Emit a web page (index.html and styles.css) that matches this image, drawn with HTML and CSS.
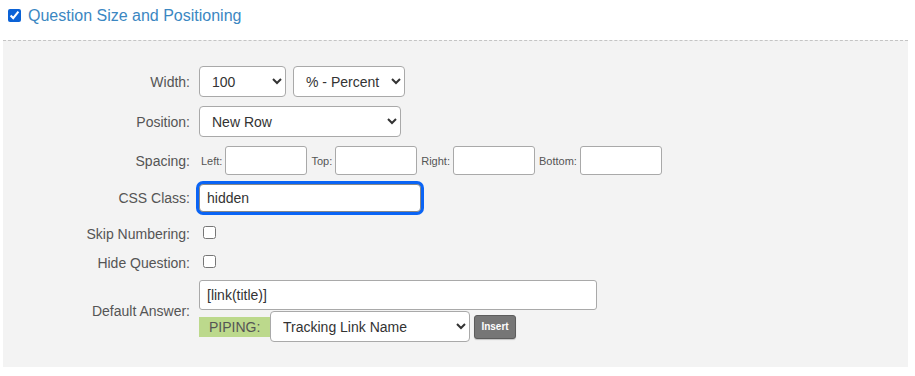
FILE: index.html
```html
<!DOCTYPE html>
<html lang="en">
<head>
    <meta charset="UTF-8">
    <meta name="viewport" content="width=device-width, initial-scale=1.0">
    <title>Question Size and Positioning</title>
    <link rel="stylesheet" href="styles.css">
</head>
<body>
    <div class="section-title">
        <input type="checkbox" id="sizeToggle" checked>
        <label for="sizeToggle">Question Size and Positioning</label>
    </div>

    <div class="panel">
        <div class="row">
            <label class="lbl">Width:</label>
            <div class="fields">
                <select class="sel sel-width">
                    <option>100</option>
                </select>
                <select class="sel sel-unit">
                    <option>% - Percent</option>
                </select>
            </div>
        </div>

        <div class="row">
            <label class="lbl">Position:</label>
            <div class="fields">
                <select class="sel sel-position">
                    <option>New Row</option>
                </select>
            </div>
        </div>

        <div class="row">
            <label class="lbl">Spacing:</label>
            <div class="fields spacing">
                <span class="small">Left:</span><input type="text" class="txt txt-spacing">
                <span class="small">Top:</span><input type="text" class="txt txt-spacing">
                <span class="small">Right:</span><input type="text" class="txt txt-spacing">
                <span class="small">Bottom:</span><input type="text" class="txt txt-spacing">
            </div>
        </div>

        <div class="row row-css">
            <label class="lbl">CSS Class:</label>
            <div class="fields">
                <input type="text" class="txt txt-css focused" value="hidden">
            </div>
        </div>

        <div class="row row-check">
            <label class="lbl">Skip Numbering:</label>
            <div class="fields">
                <input type="checkbox" class="chk">
            </div>
        </div>

        <div class="row row-check">
            <label class="lbl">Hide Question:</label>
            <div class="fields">
                <input type="checkbox" class="chk">
            </div>
        </div>

        <div class="row row-default">
            <label class="lbl">Default Answer:</label>
            <div class="fields stack">
                <input type="text" class="txt txt-default" value="[link(title)]">
                <div class="piping">
                    <span class="piping-label">PIPING:</span>
                    <select class="sel sel-piping">
                        <option>Tracking Link Name</option>
                    </select>
                    <button type="button" class="btn-insert">Insert</button>
                </div>
            </div>
        </div>
    </div>
</body>
</html>
```

FILE: styles.css
```css
body {
    font-family: Arial, "Liberation Sans", sans-serif;
    margin: 0;
    padding: 0;
    background: #fff;
    color: #555;
}

.section-title {
    display: flex;
    align-items: center;
    height: 31px;
    padding-left: 8px;
}

.section-title input {
    width: 13px;
    height: 13px;
    margin: 0 7px 0 0;
    accent-color: #0b62d6;
}

.section-title label {
    font-size: 16px;
    color: #3b87c2;
}

.panel {
    margin: 9px 7px 0 3px;
    padding: 25px 0 25px 0;
    background-color: #f3f3f3;
    border-top: 1px dashed #c4c4c4;
}

.row {
    display: flex;
    align-items: center;
    margin-bottom: 9px;
}

.lbl {
    width: 187px;
    text-align: right;
    padding-right: 9px;
    font-size: 14px;
    color: #555;
    flex-shrink: 0;
}

.fields {
    display: flex;
    align-items: center;
}

.sel {
    height: 31px;
    font-family: inherit;
    font-size: 14px;
    color: #333;
    background: #fff;
    border: 1px solid #a9a9a9;
    border-radius: 4px;
    padding: 0 6px 0 8px;
}

.sel-width {
    width: 87px;
    margin-right: 7px;
}

.sel-unit {
    width: 112px;
}

.sel-position {
    width: 202px;
}

.txt {
    font-family: inherit;
    font-size: 14px;
    color: #333;
    background: #fff;
    border: 1px solid #a9a9a9;
    border-radius: 3px;
    box-sizing: border-box;
    margin: 0;
}

.spacing .small {
    font-size: 11px;
    color: #555;
    margin: 0 3px 0 1px;
}

.spacing .small:first-child {
    margin-left: 2px;
}

.txt-spacing {
    width: 82px;
    height: 29px;
    margin-right: 3px;
}

.row-css {
    margin-bottom: 6px;
}

.txt-css {
    width: 222px;
    height: 28px;
    padding: 0 7px;
}

.focused {
    outline: none;
    border-color: #888;
    box-shadow: 0 0 0 3px #0a64f5;
    border-radius: 4px;
}

.row-check {
    height: 29px;
    margin-bottom: 0;
}

.row-check .lbl {
    padding-top: 2px;
}

.chk {
    width: 13px;
    height: 13px;
    margin: 0 0 0 4px;
}

.row-default {
    margin-top: 4px;
    margin-bottom: 0;
}

.stack {
    flex-direction: column;
    align-items: flex-start;
}

.txt-default {
    width: 398px;
    height: 30px;
    padding: 0 7px;
}

.piping {
    display: flex;
    align-items: center;
    margin-top: 1px;
}

.piping-label {
    display: inline-block;
    width: 61px;
    height: 20px;
    line-height: 20px;
    padding-left: 10px;
    background-color: #bcd98c;
    color: #555;
    font-size: 14px;
}

.sel-piping {
    width: 200px;
    height: 31px;
    padding-left: 8px;
}

.btn-insert {
    margin-left: 4px;
    width: 42px;
    height: 24px;
    padding: 0;
    background-color: #767676;
    color: #fff;
    border: 1px solid #5c5c5c;
    border-radius: 3px;
    font-family: inherit;
    font-size: 10px;
    font-weight: bold;
    box-shadow: 0 1px 1px rgba(0, 0, 0, 0.2);
    cursor: pointer;
}
```
